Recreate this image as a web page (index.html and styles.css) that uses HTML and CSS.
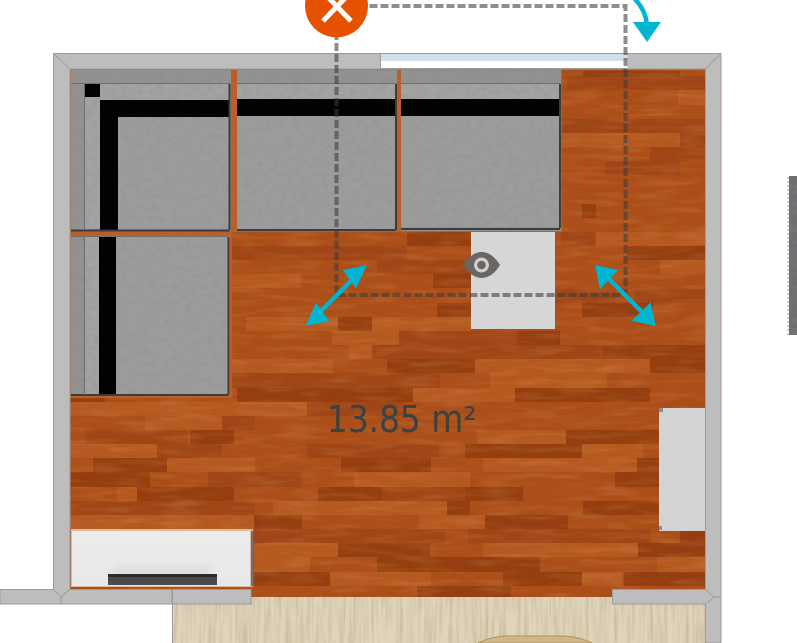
FILE: index.html
```html
<!DOCTYPE html>
<html lang="en">
<head>
<meta charset="utf-8">
<title>Floor plan</title>
<link rel="stylesheet" href="styles.css">
</head>
<body>
<svg class="plan" width="797" height="643" viewBox="0 0 797 643" xmlns="http://www.w3.org/2000/svg">
  <defs>
    <filter id="grain" x="0" y="0" width="100%" height="100%">
      <feTurbulence type="fractalNoise" baseFrequency="0.04 0.5" numOctaves="2" seed="4"/>
      <feColorMatrix values="0 0 0 0 0.3  0 0 0 0 0.08  0 0 0 0 0  0.55 0 0 0 -0.2"/>
    </filter>
    <filter id="glow" x="0" y="0" width="100%" height="100%">
      <feTurbulence type="fractalNoise" baseFrequency="0.025 0.15" numOctaves="2" seed="11"/>
      <feColorMatrix values="0 0 0 0 0.85  0 0 0 0 0.45  0 0 0 0 0.18  0.45 0 0 0 -0.2"/>
    </filter>
    <filter id="fabric" x="0" y="0" width="100%" height="100%">
      <feTurbulence type="fractalNoise" baseFrequency="0.14 0.18" numOctaves="3" seed="7" result="n"/>
      <feColorMatrix in="n" values="0 0 0 0 0.25  0 0 0 0 0.25  0 0 0 0 0.25  0.7 0 0 0 -0.28" result="a"/>
      <feComposite in="a" in2="SourceAlpha" operator="in" result="c"/>
      <feMerge><feMergeNode in="SourceGraphic"/><feMergeNode in="c"/></feMerge>
    </filter>
    <filter id="oak" x="0" y="0" width="100%" height="100%">
      <feTurbulence type="fractalNoise" baseFrequency="0.28 0.018" numOctaves="3" seed="9"/>
      <feColorMatrix values="0 0 0 0 0.6  0 0 0 0 0.5  0 0 0 0 0.34  2 0 0 0 -0.7"/>
    </filter>
    <filter id="soft" x="-20%" y="-40%" width="140%" height="180%">
      <feGaussianBlur stdDeviation="3"/>
    </filter>
    <linearGradient id="unit" x1="0" y1="0" x2="0" y2="1">
      <stop offset="0" stop-color="#ececec"/>
      <stop offset="1" stop-color="#e8e8e8"/>
    </linearGradient>
  </defs>

  <!-- lower room floor -->
  <rect class="oak-base" x="172" y="597" width="534" height="46"/>
  <rect class="oak-grain" x="172" y="597" width="534" height="46"/>
  <path class="rug" d="M478 643 Q490 637 505 636 L565 636 Q580 637 592 643 Z"/>

  <!-- wood floor -->
  <rect class="wood" x="70" y="69" width="636" height="528"/>
  <g>
    <rect class="d" x="567" y="76" width="139" height="14"/>
    <rect class="dd" x="583" y="71" width="97" height="6"/>
    <rect class="l" x="678" y="90" width="28" height="15"/>
    <rect class="d" x="561" y="119" width="145" height="14"/>
    <rect class="l" x="562" y="133" width="118" height="14"/>
    <rect class="d" x="680" y="133" width="26" height="14"/>
    <rect class="d" x="650" y="147" width="56" height="14"/>
    <rect class="d" x="605" y="161" width="75" height="14"/>
    <rect class="dd" x="582" y="204" width="14" height="14"/>
    <rect class="d" x="561" y="232" width="34" height="14"/>
    <rect class="l" x="596" y="232" width="110" height="14"/>
    <rect class="dd" x="407" y="232" width="64" height="14"/>
    <rect class="d" x="231" y="246" width="176" height="14"/>
    <rect class="dd" x="627" y="246" width="79" height="14"/>
    <rect class="l" x="660" y="260" width="46" height="14"/>
    <rect class="d" x="377" y="260" width="94" height="14"/>
    <rect class="dd" x="433" y="274" width="38" height="14"/>
    <rect class="l" x="231" y="274" width="70" height="14"/>
    <rect class="d" x="555" y="289" width="60" height="14"/>
    <rect class="d" x="635" y="289" width="71" height="14"/>
    <rect class="dd" x="437" y="303" width="34" height="14"/>
    <rect class="dd" x="582" y="303" width="71" height="14"/>
    <rect class="dd" x="338" y="317" width="34" height="14"/>
    <rect class="l" x="246" y="317" width="92" height="14"/>
    <rect class="l" x="372" y="317" width="99" height="14"/>
    <rect class="l" x="332" y="331" width="67" height="14"/>
    <rect class="d" x="399" y="331" width="118" height="14"/>
    <rect class="dd" x="517" y="331" width="43" height="14"/>
    <rect class="l" x="349" y="345" width="23" height="14"/>
    <rect class="d" x="372" y="345" width="231" height="14"/>
    <rect class="dd" x="603" y="345" width="103" height="14"/>
    <rect class="l" x="231" y="359" width="102" height="14"/>
    <rect class="dd" x="387" y="359" width="88" height="14"/>
    <rect class="l" x="475" y="359" width="175" height="14"/>
    <rect class="dd" x="650" y="359" width="56" height="14"/>
    <rect class="d" x="231" y="373" width="209" height="15"/>
    <rect class="l" x="490" y="373" width="117" height="15"/>
    <rect class="dd" x="237" y="388" width="176" height="14"/>
    <rect class="l" x="413" y="388" width="102" height="14"/>
    <rect class="dd" x="515" y="388" width="135" height="14"/>
    <rect class="dd" x="70" y="396" width="35" height="6"/>
    <rect class="l" x="70" y="402" width="237" height="14"/>
    <rect class="d" x="307" y="402" width="96" height="14"/>
    <rect class="l" x="145" y="416" width="77" height="14"/>
    <rect class="d" x="222" y="416" width="33" height="14"/>
    <rect class="d" x="85" y="430" width="103" height="14"/>
    <rect class="dd" x="190" y="430" width="44" height="14"/>
    <rect class="l" x="477" y="430" width="89" height="14"/>
    <rect class="dd" x="566" y="430" width="93" height="14"/>
    <rect class="l" x="70" y="444" width="87" height="14"/>
    <rect class="d" x="157" y="444" width="65" height="14"/>
    <rect class="d" x="307" y="444" width="132" height="14"/>
    <rect class="dd" x="465" y="444" width="117" height="14"/>
    <rect class="l" x="582" y="444" width="61" height="14"/>
    <rect class="dd" x="93" y="458" width="74" height="14"/>
    <rect class="l" x="167" y="458" width="88" height="14"/>
    <rect class="dd" x="341" y="458" width="90" height="14"/>
    <rect class="l" x="483" y="458" width="154" height="14"/>
    <rect class="dd" x="637" y="458" width="22" height="14"/>
    <rect class="dd" x="70" y="472" width="80" height="15"/>
    <rect class="d" x="208" y="472" width="93" height="15"/>
    <rect class="l" x="354" y="472" width="116" height="15"/>
    <rect class="dd" x="615" y="472" width="44" height="15"/>
    <rect class="l" x="117" y="487" width="20" height="14"/>
    <rect class="dd" x="137" y="487" width="97" height="14"/>
    <rect class="dd" x="318" y="487" width="64" height="14"/>
    <rect class="d" x="382" y="487" width="88" height="14"/>
    <rect class="dd" x="465" y="487" width="58" height="14"/>
    <rect class="d" x="70" y="501" width="185" height="14"/>
    <rect class="l" x="273" y="501" width="174" height="14"/>
    <rect class="dd" x="447" y="501" width="23" height="14"/>
    <rect class="dd" x="583" y="501" width="76" height="14"/>
    <rect class="l" x="70" y="515" width="184" height="14"/>
    <rect class="dd" x="254" y="515" width="48" height="14"/>
    <rect class="l" x="419" y="515" width="66" height="14"/>
    <rect class="dd" x="485" y="515" width="83" height="14"/>
    <rect class="d" x="254" y="529" width="191" height="14"/>
    <rect class="d" x="468" y="529" width="182" height="14"/>
    <rect class="dd" x="680" y="529" width="26" height="14"/>
    <rect class="l" x="254" y="543" width="84" height="14"/>
    <rect class="dd" x="338" y="543" width="92" height="14"/>
    <rect class="l" x="483" y="543" width="155" height="14"/>
    <rect class="dd" x="638" y="543" width="68" height="14"/>
    <rect class="l" x="254" y="557" width="56" height="15"/>
    <rect class="dd" x="377" y="557" width="163" height="15"/>
    <rect class="l" x="657" y="557" width="49" height="15"/>
    <rect class="dd" x="254" y="572" width="76" height="14"/>
    <rect class="l" x="330" y="572" width="101" height="14"/>
    <rect class="dd" x="503" y="572" width="79" height="14"/>
    <rect class="l" x="582" y="572" width="40" height="14"/>
    <rect class="dd" x="624" y="572" width="82" height="14"/>
    <rect class="dd" x="417" y="586" width="94" height="11"/>
  </g>
  <rect class="overlay" x="70" y="69" width="636" height="528" filter="url(#glow)"/>
  <rect class="overlay" x="70" y="69" width="636" height="528" filter="url(#grain)"/>

  <!-- tables and cabinets -->
  <rect class="panel" x="471" y="228" width="84" height="101"/>
  <rect class="cabinet" x="659" y="408" width="47" height="123"/>
  <rect class="pin" x="659" y="408" width="4" height="4"/>
  <rect class="pin" x="659" y="526" width="3" height="4"/>

  <rect class="unit-rim" x="71" y="529" width="182" height="58"/>
  <rect class="unit" x="72" y="531" width="178" height="55"/>
  <rect class="unit-shade" x="114" y="566" width="96" height="14" filter="url(#soft)"/>
  <rect class="unit-side" x="251" y="531" width="2" height="55"/>
  <rect class="handle" x="108" y="574" width="109" height="11"/>
  <rect class="handle-top" x="108" y="574" width="109" height="3"/>

  <!-- sofa -->
  <rect class="sliver" x="70" y="69" width="492" height="163"/>
  <rect class="sliver" x="70" y="231" width="162" height="167"/>
  <g filter="url(#fabric)">
    <rect class="f-base" x="71" y="70" width="160" height="161"/>
    <rect class="f-base" x="237" y="70" width="160" height="161"/>
    <rect class="f-base" x="401" y="70" width="160" height="161"/>
    <rect class="f-base" x="71" y="236" width="159" height="160"/>

    <rect class="f-cushion" x="100" y="84" width="129" height="16"/>
    <rect class="f-cushion" x="85" y="97" width="15" height="132"/>
    <rect class="f-seat" x="118" y="117" width="111" height="113"/>

    <rect class="f-cushion" x="237" y="84" width="159" height="15"/>
    <rect class="f-seat" x="237" y="116" width="158" height="113"/>

    <rect class="f-cushion" x="401" y="84" width="159" height="15"/>
    <rect class="f-seat" x="401" y="116" width="158" height="111"/>

    <rect class="f-cushion" x="85" y="237" width="14" height="158"/>
    <rect class="f-seat" x="116" y="237" width="112" height="157"/>
  </g>
  <rect class="black" x="85" y="84" width="15" height="13"/>
  <rect class="black" x="100" y="100" width="130" height="17"/>
  <rect class="black" x="100" y="100" width="18" height="130"/>
  <rect class="black" x="237" y="99" width="159" height="17"/>
  <rect class="black" x="401" y="99" width="159" height="17"/>
  <rect class="black" x="99" y="236" width="17" height="160"/>
  <path class="edge" d="M229.500 84V230M71 230.500H229.500"/>
  <path class="edge" d="M396 84V230M237 230H396"/>
  <path class="edge" d="M560 84V228M401 229H560"/>
  <path class="edge" d="M228.500 237V395M71 395H228.500"/>
  <path class="seam" d="M71 83.500H230M237 83.500H396M401 83.500H560M84.500 84V230M71 236.500H229M84.500 237V395"/>

  <!-- walls -->
  <polygon class="wall" points="53.500,53.500 721,53.500 705.500,69 70,69"/>
  <polygon class="wall" points="53.500,53.500 70,69 70,589 61,597 53.500,589.500"/>
  <polygon class="wall" points="721,53.500 721,643 705.500,643 705.500,69"/>
  <polygon class="wall" points="0,589.500 53.500,589.500 61,597 61,604 0,604"/>
  <polygon class="wall" points="70,589.500 172,589.500 172,604 61,604 61,597"/>
  <rect class="wall" x="172.500" y="589.500" width="78.500" height="14.500"/>
  <polygon class="wall" points="612.500,589.500 705.500,589.500 714,597 705.500,604 612.500,604"/>
  <path class="wall-line" d="M714 597H721M172.500 604V643"/>
  <rect class="glass" x="380.500" y="54" width="247" height="7"/>
  <rect class="pane" x="380.500" y="61" width="247" height="7.500"/>
  <path class="wall-line" d="M380.500 53.500H627.500M380.500 68.500H627.500M380.500 53.500V68.500"/>

  <!-- next room edge -->
  <path class="next-rim" d="M788 177V335"/>
  <rect class="next-room" x="789" y="176" width="8" height="159" filter="url(#fabric)"/>

  <!-- area label -->
  <text class="area" x="326.500" y="432">13.85 m²</text>

  <!-- selection -->
  <rect class="selection" x="336.500" y="6" width="289" height="289"/>

  <g class="eye">
    <path class="eye-lid" d="M463 265C468 257 475 252 481.500 252C489 252 495 257 500 265C495 273 489 278 481.500 278C475 278 468 273 463 265Z"/>
    <circle class="eye-ring" cx="481.500" cy="265" r="7.500"/>
    <circle class="eye-lid" cx="481.500" cy="265" r="4.300"/>
  </g>

  <path class="teal-line" d="M320 312L353 279"/>
  <polygon class="teal" points="305.700,326 329.300,320.700 316,302.700"/>
  <polygon class="teal" points="367,265 342.700,270 356,288.300"/>
  <path class="teal-line" d="M609 279L642 312"/>
  <polygon class="teal" points="595,265 618.300,270 600,289.300"/>
  <polygon class="teal" points="655.700,326 631.700,320.700 650.700,302.300"/>

  <path class="teal-line" d="M634 -2C642 6 646 14 647 25"/>
  <polygon class="teal" points="633,22 661,22 647,42"/>

  <circle class="close" cx="336.500" cy="6" r="31.500"/>
  <path class="close-x" d="M323 21L351 -8M323 -8L351 21"/>
</svg>
</body>
</html>
```

FILE: styles.css
```css
html, body {
  margin: 0;
  padding: 0;
  background: #ffffff;
  overflow: hidden;
}
.plan { display: block; }

.wood { fill: #ad4e1b; }
.d { fill: #a14518; }
.dd { fill: #953d11; }
.l { fill: #b85a23; }
.overlay { fill: #000; }

.oak-base { fill: #e0d5bc; }
.oak-grain { fill: #000; filter: url(#oak); }
.rug { fill: #d5b681; stroke: #a89468; stroke-width: 1; }

.panel { fill: #d6d6d6; }
.cabinet { fill: #d3d3d3; }
.pin { fill: #8d8d8d; }
.unit-rim { fill: #dcb9a2; }
.unit { fill: url(#unit); }
.unit-shade { fill: #dedede; }
.unit-side { fill: #6d7075; }
.handle { fill: #4a4a4a; }
.handle-top { fill: #2b2b2b; }

.sliver { fill: #bb5f27; }
.f-base { fill: #929292; }
.f-cushion { fill: #a3a3a3; }
.f-seat { fill: #9c9c9c; }
.black { fill: #020202; }
.edge { fill: none; stroke: #3c3c3c; stroke-width: 2; }
.seam { fill: none; stroke: #6e6e6e; stroke-width: 1; }

.wall { fill: #bdbdbd; stroke: #9b9b9b; stroke-width: 1; }
.wall-line { fill: none; stroke: #9b9b9b; stroke-width: 1; }
.glass { fill: #cfe0e8; }
.pane { fill: #ffffff; }

.next-rim { fill: none; stroke: #d0d0d0; stroke-width: 2; stroke-dasharray: 2 2; }
.next-room { fill: #6e6e72; }

.area {
  font-family: "DejaVu Sans", sans-serif;
  font-stretch: condensed;
  font-size: 36.500px;
  fill: #3b4243;
}

.selection {
  fill: none;
  stroke: rgba(60, 60, 60, 0.58);
  stroke-width: 4;
  stroke-dasharray: 8 3;
}

.eye-lid { fill: #6b6563; }
.eye-ring { fill: #d2cfcd; }

.teal { fill: #00b5d1; }
.teal-line { fill: none; stroke: #00b5d1; stroke-width: 4.500; }

.close { fill: #e65100; }
.close-x { fill: none; stroke: #ffffff; stroke-width: 5; }
```
